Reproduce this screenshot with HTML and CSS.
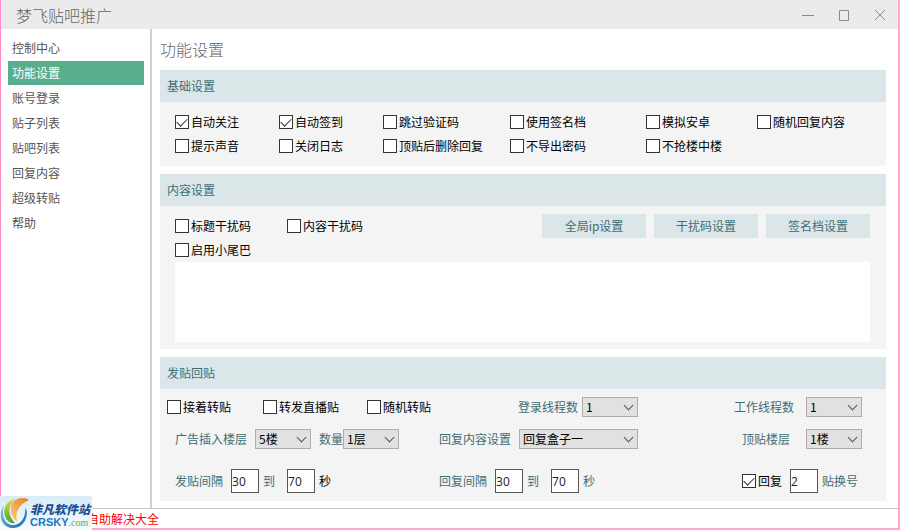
FILE: index.html
```html
<!DOCTYPE html>
<html lang="zh-CN">
<head>
  <meta charset="UTF-8" />
  <meta name="viewport" content="width=device-width, initial-scale=1.0" />
  <title>梦飞贴吧推广</title>
  <link rel="stylesheet" href="styles.css">
</head>
<body>
  <div class="window">
    <header class="titlebar">
      <div class="app-name">梦飞贴吧推广</div>
      <div class="window-buttons">
        <button type="button" aria-label="最小化"><svg width="14" height="14" viewBox="0 0 14 14"><path d="M1 7.500h12"/></svg></button>
        <button type="button" aria-label="最大化"><svg width="14" height="14" viewBox="0 0 14 14"><path d="M2.500 2.500h9v10h-9z"/></svg></button>
        <button type="button" aria-label="关闭"><svg width="14" height="14" viewBox="0 0 14 14"><path d="M2 2l10 10M12 2L2 12"/></svg></button>
      </div>
    </header>

    <div class="main">
      <nav class="sidebar">
        <a href="#">控制中心</a>
        <a href="#" class="active">功能设置</a>
        <a href="#">账号登录</a>
        <a href="#">贴子列表</a>
        <a href="#">贴吧列表</a>
        <a href="#">回复内容</a>
        <a href="#">超级转贴</a>
        <a href="#">帮助</a>
      </nav>

      <main class="content">
        <h1>功能设置</h1>

        <section class="panel">
          <h2>基础设置</h2>
          <div class="panel-body basic">
            <label class="check"><input type="checkbox" checked>自动关注</label>
            <label class="check"><input type="checkbox" checked>自动签到</label>
            <label class="check"><input type="checkbox">跳过验证码</label>
            <label class="check"><input type="checkbox">使用签名档</label>
            <label class="check"><input type="checkbox">模拟安卓</label>
            <label class="check"><input type="checkbox">随机回复内容</label>
            <label class="check"><input type="checkbox">提示声音</label>
            <label class="check"><input type="checkbox">关闭日志</label>
            <label class="check"><input type="checkbox">顶贴后删除回复</label>
            <label class="check"><input type="checkbox">不导出密码</label>
            <label class="check"><input type="checkbox">不抢楼中楼</label>
          </div>
        </section>

        <section class="panel">
          <h2>内容设置</h2>
          <div class="panel-body text-settings">
            <div class="toolbar">
              <div class="noise">
                <label class="check"><input type="checkbox">标题干扰码</label>
                <label class="check"><input type="checkbox">内容干扰码</label>
              </div>
              <div class="actions">
                <button type="button">全局ip设置</button>
                <button type="button">干扰码设置</button>
                <button type="button">签名档设置</button>
              </div>
            </div>
            <label class="check"><input type="checkbox">启用小尾巴</label>
            <textarea aria-label="小尾巴内容"></textarea>
          </div>
        </section>

        <section class="panel">
          <h2>发贴回贴</h2>
          <div class="panel-body posting">
            <div class="group repost">
              <label class="check"><input type="checkbox">接着转贴</label>
              <label class="check"><input type="checkbox">转发直播贴</label>
              <label class="check"><input type="checkbox">随机转贴</label>
            </div>
            <div class="group end">
              <label for="login-threads">登录线程数</label>
              <span class="select"><select id="login-threads"><option>1</option></select></span>
            </div>
            <div class="group end work">
              <label for="work-threads">工作线程数</label>
              <span class="select"><select id="work-threads"><option>1</option></select></span>
            </div>

            <div class="group">
              <label for="ad-floor">广告插入楼层</label>
              <span class="select"><select id="ad-floor"><option>5楼</option></select></span>
              <div class="amount">
                <label for="amount">数量</label>
                <span class="select"><select id="amount"><option>1层</option></select></span>
              </div>
            </div>
            <div class="group">
              <label for="reply-box">回复内容设置</label>
              <span class="select fill"><select id="reply-box"><option>回复盒子一</option></select></span>
            </div>
            <div class="group end bump">
              <label for="bump-floor">顶贴楼层</label>
              <span class="select"><select id="bump-floor"><option>1楼</option></select></span>
            </div>

            <div class="group interval">
              <label for="post-from">发贴间隔</label>
              <input type="text" id="post-from" value="30">
              <label for="post-to">到</label>
              <input type="text" id="post-to" class="to" value="70">
              <span class="unit">秒</span>
            </div>
            <div class="group interval">
              <label for="reply-from">回复间隔</label>
              <input type="text" id="reply-from" value="30">
              <label for="reply-to">到</label>
              <input type="text" id="reply-to" class="to" value="70">
              <span>秒</span>
            </div>
            <div class="group end switch">
              <label class="check"><input type="checkbox" checked>回复</label>
              <input type="text" id="switch-after" value="2">
              <label for="switch-after">贴换号</label>
            </div>
          </div>
        </section>
      </main>
    </div>

    <footer class="statusbar">
      <a href="#">自助解决大全</a>
      <div class="site-logo">
        <svg width="28" height="32" viewBox="0 0 28 32">
          <defs>
            <linearGradient id="blue" x1="0" y1="0" x2="1" y2="1">
              <stop offset="0" stop-color="#8fd0ee"/>
              <stop offset="1" stop-color="#0f62ae"/>
            </linearGradient>
            <linearGradient id="green" x1="0" y1="0" x2="0" y2="1">
              <stop offset="0" stop-color="#d9dc3c"/>
              <stop offset="1" stop-color="#4fa33a"/>
            </linearGradient>
            <linearGradient id="orange" x1="1" y1="0" x2="0" y2="1">
              <stop offset="0" stop-color="#ef7a1c"/>
              <stop offset="1" stop-color="#f9cf7a"/>
            </linearGradient>
          </defs>
          <path fill="url(#blue)" d="M4 8C-2 16 0 29 11 31c9 1 16-6 16-16 0-2-1-3-2-4 1 9-4 17-12 17C5 28 1 18 4 8z"/>
          <path fill="url(#green)" d="M15 2C5 4 1 15 7 23c2 2 5 4 8 3C8 19 7 9 15 2z"/>
          <path fill="url(#orange)" d="M30 3C23-1 13 1 11 9c-1 6 1 12 6 16-2-9 1-18 13-22z"/>
        </svg>
        <div class="site-name">
          <span class="cn">非凡软件站</span>
          <span class="en"><b>CRSKY</b><i>.com</i></span>
        </div>
      </div>
    </footer>
  </div>
</body>
</html>
```
FILE: styles.css
```css
* {
  box-sizing: border-box;
}
body {
  margin: 0;
  background: #fff;
  font-family: "Noto Sans CJK SC", sans-serif;
  font-size: 12px;
  line-height: 16px;
  color: #000;
}
button, input, select, textarea {
  font: inherit;
  color: inherit;
  margin: 0;
  border-radius: 0;
}
a {
  text-decoration: none;
}
.window {
  display: flex;
  flex-direction: column;
  min-height: 100vh;
  border: 1px solid #ff8cc6;
  border-top: none;
  border-right: 2px solid #ffa6d3;
  border-bottom: 2px solid #ffa6d3;
}

/* title bar */
.titlebar {
  display: flex;
  justify-content: space-between;
  align-items: center;
  height: 29px;
  padding: 0 11px 0 15px;
  background: #ebebeb;
}
.app-name, h1 {
  font-size: 16px;
  line-height: 24px;
  font-weight: 300;
  color: #666;
}
.window-buttons {
  display: flex;
  gap: 22px;
}
.window-buttons button {
  display: flex;
  padding: 0;
  border: none;
  background: none;
}
.window-buttons svg {
  fill: none;
  stroke: #8c8c8c;
}

.main {
  display: flex;
  flex: 1;
}

/* sidebar */
.sidebar {
  display: flex;
  flex-direction: column;
  gap: 1px;
  width: 151px;
  padding: 7px 6px 7px 7px;
  border-right: 2px solid #d2d2d2;
}
.sidebar a {
  padding: 0 4px;
  line-height: 24px;
  color: #555;
}
.sidebar a.active {
  background: #59ae8d;
  color: #fff;
}

/* panels */
.content {
  flex: 1;
  padding: 8px 12px 7px 8px;
}
h1 {
  margin: 0 0 9px;
}
.panel + .panel {
  margin-top: 8px;
}
h2 {
  margin: 0;
  padding: 0 7px;
  background: #dae6e8;
  font-size: 12px;
  line-height: 32px;
  font-weight: 400;
  color: #3f6e75;
}
.panel-body {
  background: #f4f4f4;
}
.check {
  display: flex;
  align-items: center;
  gap: 2px;
  white-space: nowrap;
}
.check input {
  appearance: none;
  display: grid;
  place-items: center;
  width: 14px;
  height: 14px;
  border: 1px solid #333;
  background: #fff;
}
.check input:checked::after {
  content: "";
  width: 9px;
  height: 5px;
  margin-bottom: 3px;
  border: solid #333;
  border-width: 0 0 1px 1px;
  transform: rotate(-45deg);
}

.basic {
  display: grid;
  grid-template-columns: 104fr 104fr 127fr 136fr 111fr 113fr;
  row-gap: 8px;
  padding: 12px 16px 12px 15px;
}

.text-settings {
  padding: 8px 16px 7px 15px;
}
.toolbar {
  display: flex;
  justify-content: space-between;
}
.noise {
  display: flex;
  gap: 36px;
}
.actions {
  display: flex;
  gap: 8px;
}
.actions button {
  width: 104px;
  height: 24px;
  padding: 0;
  border: none;
  background: #dae6e8;
  color: #3f6e75;
}
textarea {
  display: block;
  width: 100%;
  height: 80px;
  margin-top: 4px;
  border: none;
  background: #fff;
  resize: none;
}
.text-settings > .check {
  margin-top: 4px;
}

/* posting */
.posting {
  display: grid;
  grid-template-columns: 272fr 199fr 224fr;
  row-gap: 12px;
  padding: 8px 24px 8px 7px;
}
.group {
  display: flex;
  align-items: center;
  gap: 8px;
  color: #3f6e75;
}
.group:nth-child(3n + 1) {
  padding-left: 8px;
}
.group.repost {
  display: grid;
  grid-template-columns: 96px 104px auto;
  gap: 0;
  padding-left: 0;
}
.group.end {
  justify-content: flex-end;
  gap: 4px;
}
.group.work {
  gap: 12px;
}
.group.bump {
  gap: 16px;
}
.group .check, .unit {
  color: #000;
}
.amount {
  display: flex;
  align-items: center;
}
.interval, .switch {
  height: 24px;
  margin-top: 8px;
}
.group.interval {
  gap: 4px;
}
.group.interval > input:first-of-type {
  margin-left: 4px;
}
.group.interval .to {
  margin-left: 8px;
}
.group.switch {
  padding-right: 4px;
}
.group.switch .check {
  margin-right: 4px;
}
.posting input[type="text"] {
  width: 28px;
  height: 24px;
  padding: 0;
  border: 1px solid #555;
  background: #fff;
  font-family: "Open Sans", sans-serif;
  color: #222;
}
.select {
  position: relative;
  width: 56px;
}
.select.fill {
  flex: 1;
}
.select select {
  appearance: none;
  display: block;
  width: 100%;
  height: 20px;
  padding: 0 3px;
  border: 1px solid #adadad;
  background: #e1e1e1;
  color: #000;
  line-height: 18px;
}
.select::after {
  content: "";
  position: absolute;
  top: 5px;
  right: 6px;
  width: 6px;
  height: 6px;
  border: solid #555;
  border-width: 0 1px 1px 0;
  transform: rotate(45deg);
  pointer-events: none;
}

/* status bar */
.statusbar {
  position: relative;
  padding: 2px 0 1px 86px;
  border-top: 1px solid #c8c8c8;
}
.statusbar > a {
  color: #f00;
}
.site-logo {
  position: absolute;
  left: -1px;
  bottom: -2px;
  display: flex;
  align-items: center;
  width: 92px;
  height: 34px;
  background: linear-gradient(to bottom, #d8ecf8, #f5fafd);
}
.site-name {
  display: flex;
  flex-direction: column;
  padding: 4px 0 0 2px;
  color: #1c4f94;
}
.site-name .cn {
  font-size: 12px;
  line-height: 14px;
  font-weight: 900;
  font-style: italic;
}
.site-name .en {
  font-size: 10px;
  line-height: 12px;
}
.en b {
  font-family: "Liberation Sans", sans-serif;
  font-size: 11px;
  color: #1878be;
}
.en i {
  font-family: "Liberation Serif", serif;
  font-style: normal;
  color: #6cab3c;
}
```
